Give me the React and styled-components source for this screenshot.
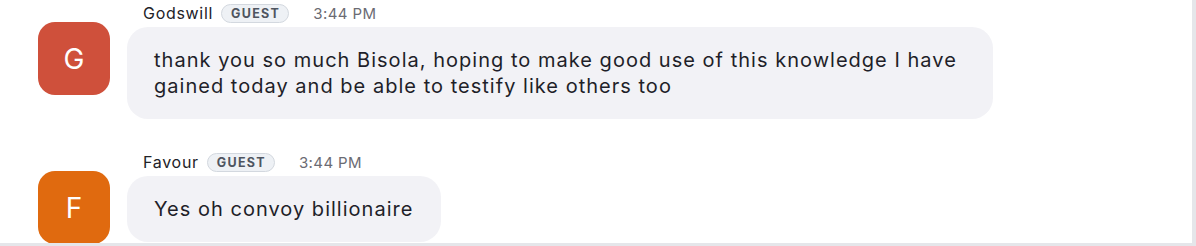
import React from "react";
import styled, { createGlobalStyle } from "styled-components";

const Global = createGlobalStyle`
  html, body { margin: 0; padding: 0; background: #e5e6ea; }
  body { font-family: "Inter", "Liberation Sans", sans-serif; -webkit-font-smoothing: antialiased; }
`;

const Panel = styled.div`
  width: 1192px;
  height: 243px;
  background: #ffffff;
  box-sizing: border-box;
  padding: 3px 0 0 38px;
  display: flex;
  flex-direction: column;
  gap: 33px;
  overflow: hidden;
`;

const Message = styled.div`
  display: flex;
  align-items: flex-start;
  gap: 17px;
`;

const Avatar = styled.div`
  flex: 0 0 auto;
  width: 72px;
  height: 73px;
  margin-top: 19px;
  border-radius: 17px;
  background: ${(p) => p.$color};
  color: #ffffff;
  display: flex;
  align-items: center;
  justify-content: center;
  font-size: 28px;
  font-weight: 400;
`;

const Content = styled.div`
  display: flex;
  flex-direction: column;
  align-items: flex-start;
  gap: 4px;
  min-width: 0;
`;

const Header = styled.div`
  display: flex;
  align-items: center;
  height: 20px;
  padding-left: 16px;
`;

const Name = styled.span`
  font-size: 16px;
  letter-spacing: 0.7px;
  color: #222228;
  margin-right: 8px;
`;

const Badge = styled.span`
  font-size: 12.5px;
  font-weight: 700;
  letter-spacing: 1.3px;
  color: #4f5560;
  background: #eef1f5;
  border: 1px solid #d3d8df;
  border-radius: 10px;
  height: 17px;
  line-height: 17px;
  padding: 0 8px 0 9px;
  margin-right: 24px;
`;

const Time = styled.span`
  font-size: 15px;
  letter-spacing: 0.4px;
  color: #6b6b73;
`;

const Bubble = styled.div`
  background: #f2f2f6;
  border-radius: 21px;
  padding: 20px 28px 20px 27px;
  max-width: 866px;
  box-sizing: border-box;
  font-size: 20px;
  letter-spacing: 1.02px;
  line-height: 26px;
  color: #1f1f29;
`;

const messages = [
  {
    name: "Godswill",
    initial: "G",
    color: "#cf503b",
    time: "3:44 PM",
    text:
      "thank you so much Bisola, hoping to make good use of this knowledge I have gained today and be able to testify like others too",
  },
  {
    name: "Favour",
    initial: "F",
    color: "#e06a0f",
    time: "3:44 PM",
    text: "Yes oh convoy billionaire",
  },
];

export default function App() {
  return (
    <>
      <Global />
      <Panel>
        {messages.map((m, i) => (
          <Message key={i}>
            <Avatar $color={m.color}>{m.initial}</Avatar>
            <Content>
              <Header>
                <Name>{m.name}</Name>
                <Badge>GUEST</Badge>
                <Time>{m.time}</Time>
              </Header>
              <Bubble>{m.text}</Bubble>
            </Content>
          </Message>
        ))}
      </Panel>
    </>
  );
}
